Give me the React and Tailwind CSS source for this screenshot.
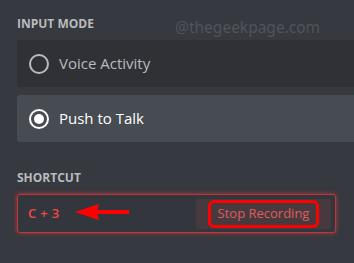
import React from "react";

export default function App() {
  const font = { fontFamily: '"Open Sans", "Noto Sans", sans-serif' };
  return (
    <div
      className="relative w-[354px] h-[263px] overflow-hidden bg-[#36393f] pl-[17px] pt-[16px]"
      style={font}
    >
      <div className="text-[12px] leading-[16px] font-bold text-[#b9bbbe] tracking-[0px]">
        INPUT MODE
      </div>
      <div className="mt-[8px] flex flex-col gap-[8px] w-[360px]">
        <div className="h-[47px] rounded-[3px] bg-[#2f3136] flex items-center pl-[12px] gap-[10px]">
          <div className="w-[20px] h-[20px] rounded-full border-2 border-[#b9bbbe]" />
          <span className="text-[15px] text-[#b9bbbe]">Voice Activity</span>
        </div>
        <div className="h-[47px] rounded-[3px] bg-[#474b52] flex items-center pl-[12px] gap-[10px]">
          <div className="w-[20px] h-[20px] rounded-full border-2 border-white flex items-center justify-center">
            <div className="w-[10px] h-[10px] rounded-full bg-white" />
          </div>
          <span className="text-[15px] text-white">Push to Talk</span>
        </div>
      </div>
      <div className="mt-[28px] text-[12px] leading-[16px] font-bold text-[#b9bbbe]">
        SHORTCUT
      </div>
      <div className="mt-[8px] w-[319px] h-[39px] rounded-[3px] bg-[#33363c] border border-[#b8383c] shadow-[0_0_4px_#c0393d] flex items-center pl-[10px] pr-[4px]">
        <span className="text-[13px] font-semibold text-[#f04747] flex-1 tracking-[0.3px]">C + 3</span>
        <div className="h-[30px] w-[135px] bg-[#463a3f] flex items-center justify-center rounded-[2px]">
          <div className="h-[28px] w-[111px] rounded-[6px] border-[3px] border-[#ff0000] flex items-center justify-center">
            <span className="text-[13px] text-[#e05a5e]">Stop Recording</span>
          </div>
        </div>
      </div>

      <div className="absolute left-[175px] top-[16px] text-[15.5px] leading-[22px] text-[#50545c]" style={{ fontFamily: '"Noto Sans", sans-serif' }}>
        @thegeekpage.com
      </div>

      <svg className="absolute left-[73px] top-[203px]" width="58" height="18" viewBox="0 0 58 18">
        <rect x="22" y="7" width="34" height="4" fill="#ff0000" />
        <polygon points="2,9 26,1 24,9 26,17" fill="#ff0000" />
      </svg>
    </div>
  );
}
